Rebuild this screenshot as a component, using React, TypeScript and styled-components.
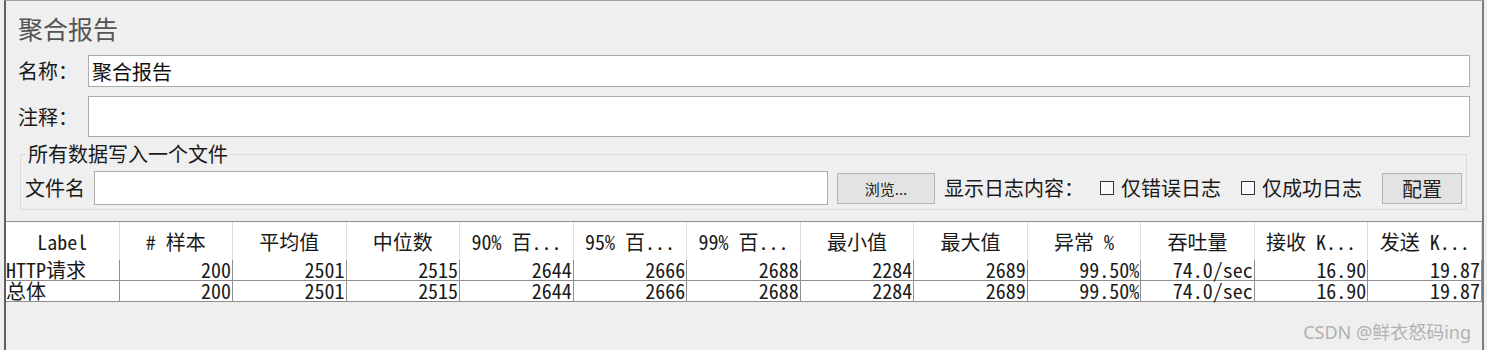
import React from 'react';
import styled, { createGlobalStyle } from 'styled-components';

const GlobalStyle = createGlobalStyle`
  html, body {
    margin: 0;
    padding: 0;
    background: #efefef;
  }
  body {
    font-family: "Noto Sans CJK SC", "Liberation Sans", sans-serif;
    color: #1a1a1a;
  }
`;

const Panel = styled.div`
  position: relative;
  box-sizing: border-box;
  width: 1480px;
  height: 350px;
  margin-left: 4px;
  border-left: 2px solid #5f5f5f;
  border-right: 2px solid #7c7c7c;
  border-top: 1px solid #a3a3a3;
  background: #efefef;
  overflow: hidden;
`;

const Form = styled.div`
  padding: 0 12px;
`;

const Title = styled.div`
  padding-top: 10px;
  font-size: 25px;
  line-height: 34px;
  color: #555;
`;

const FieldRow = styled.div<{ $h: number; $gap: number }>`
  display: flex;
  align-items: center;
  height: ${(p) => p.$h}px;
  margin-top: ${(p) => p.$gap}px;
`;

const Label = styled.span<{ $w: number }>`
  flex: none;
  width: ${(p) => p.$w}px;
  font-size: 20px;
  line-height: 24px;
  white-space: nowrap;
`;

const TextBox = styled.input`
  box-sizing: border-box;
  flex: 1;
  height: 100%;
  margin: 0;
  padding: 0 3px;
  border: 1px solid #ababab;
  background: #fff;
  font-family: inherit;
  font-size: 20px;
  color: #111;
  outline: none;
`;

const Group = styled.fieldset`
  margin: 5px 15px 0 14px;
  padding: 0 4px 4px;
  border: 1px solid #dadada;
`;

const Legend = styled.legend`
  margin-left: 1px;
  padding: 0 2px;
  font-size: 20px;
  line-height: 24px;
`;

const FileRow = styled.div`
  display: flex;
  align-items: center;
  height: 34px;
  margin-top: 5px;
`;

const FileBox = styled(TextBox)`
  flex: none;
  width: 734px;
`;

const Button = styled.button<{ $w: number; $size: number }>`
  box-sizing: border-box;
  flex: none;
  width: ${(p) => p.$w}px;
  height: 31px;
  margin: 0;
  padding: 0;
  border: 1px solid #b4b4b4;
  background: #e3e3e3;
  font-family: inherit;
  font-size: ${(p) => p.$size}px;
  color: #222;
`;

const Inline = styled.span<{ $ml: number }>`
  display: flex;
  align-items: center;
  margin-left: ${(p) => p.$ml}px;
  font-size: 20px;
  line-height: 24px;
  white-space: nowrap;
`;

const Check = styled.span`
  box-sizing: border-box;
  width: 14px;
  height: 14px;
  margin-right: 7px;
  border: 1px solid #333;
  background: #fafafa;
`;

const Push = styled.span`
  flex: 1;
`;

const Grid = styled.table`
  width: 1476px;
  margin-top: 11px;
  border-collapse: separate;
  border-spacing: 0;
  table-layout: fixed;
  border-top: 1px solid #8c8c8c;
  font-family: "Noto Sans Mono CJK SC", "Liberation Mono", monospace;
`;

const Head = styled.th`
  height: 38px;
  padding: 0;
  background: #fff;
  border-right: 1px solid #dedede;
  font-size: 20px;
  font-weight: normal;
  text-align: center;
  white-space: nowrap;
  overflow: hidden;
`;

const Cell = styled.td<{ $left?: boolean }>`
  height: 20px;
  padding: 0 1px 0 0;
  background: #fff;
  border-right: 1px solid #8f8f8f;
  border-bottom: 1px solid #8f8f8f;
  font-size: 20px;
  line-height: 20px;
  text-align: ${(p) => (p.$left ? 'left' : 'right')};
  white-space: nowrap;
  overflow: visible;
`;

const Watermark = styled.div`
  position: absolute;
  right: 11px;
  bottom: 6px;
  font-family: "Noto Sans", "Noto Sans CJK SC", sans-serif;
  font-size: 18px;
  color: #b2b2b2;
`;

const columns = ['Label', '# 样本', '平均值', '中位数', '90% 百...', '95% 百...', '99% 百...', '最小值', '最大值', '异常 %', '吞吐量', '接收 K...', '发送 K...'];

const rows = [
  ['HTTP请求', '200', '2501', '2515', '2644', '2666', '2688', '2284', '2689', '99.50%', '74.0/sec', '16.90', '19.87'],
  ['总体', '200', '2501', '2515', '2644', '2666', '2688', '2284', '2689', '99.50%', '74.0/sec', '16.90', '19.87'],
];

export default function App() {
  return (
    <>
      <GlobalStyle />
      <Panel>
        <Form>
          <Title>聚合报告</Title>
          <FieldRow $h={32} $gap={10}>
            <Label $w={70}>名称：</Label>
            <TextBox defaultValue="聚合报告" readOnly />
          </FieldRow>
          <FieldRow $h={41} $gap={9}>
            <Label $w={70}>注释：</Label>
            <TextBox readOnly />
          </FieldRow>
        </Form>
        <Group>
          <Legend>所有数据写入一个文件</Legend>
          <FileRow>
            <Label $w={69}>文件名</Label>
            <FileBox readOnly />
            <Inline $ml={9}>
              <Button $w={98} $size={15}>浏览...</Button>
            </Inline>
            <Inline $ml={9}>显示日志内容：</Inline>
            <Inline $ml={16}>
              <Check />
              仅错误日志
            </Inline>
            <Inline $ml={20}>
              <Check />
              仅成功日志
            </Inline>
            <Push />
            <Button $w={80} $size={20}>配置</Button>
          </FileRow>
        </Group>
        <Grid>
          <thead>
            <tr>
              {columns.map((c) => (
                <Head key={c}>{c}</Head>
              ))}
            </tr>
          </thead>
          <tbody>
            {rows.map((r) => (
              <tr key={r[0]}>
                {r.map((v, i) => (
                  <Cell key={i} $left={i === 0}>
                    {v}
                  </Cell>
                ))}
              </tr>
            ))}
          </tbody>
        </Grid>
        <Watermark>CSDN @鲜衣怒码ing</Watermark>
      </Panel>
    </>
  );
}
